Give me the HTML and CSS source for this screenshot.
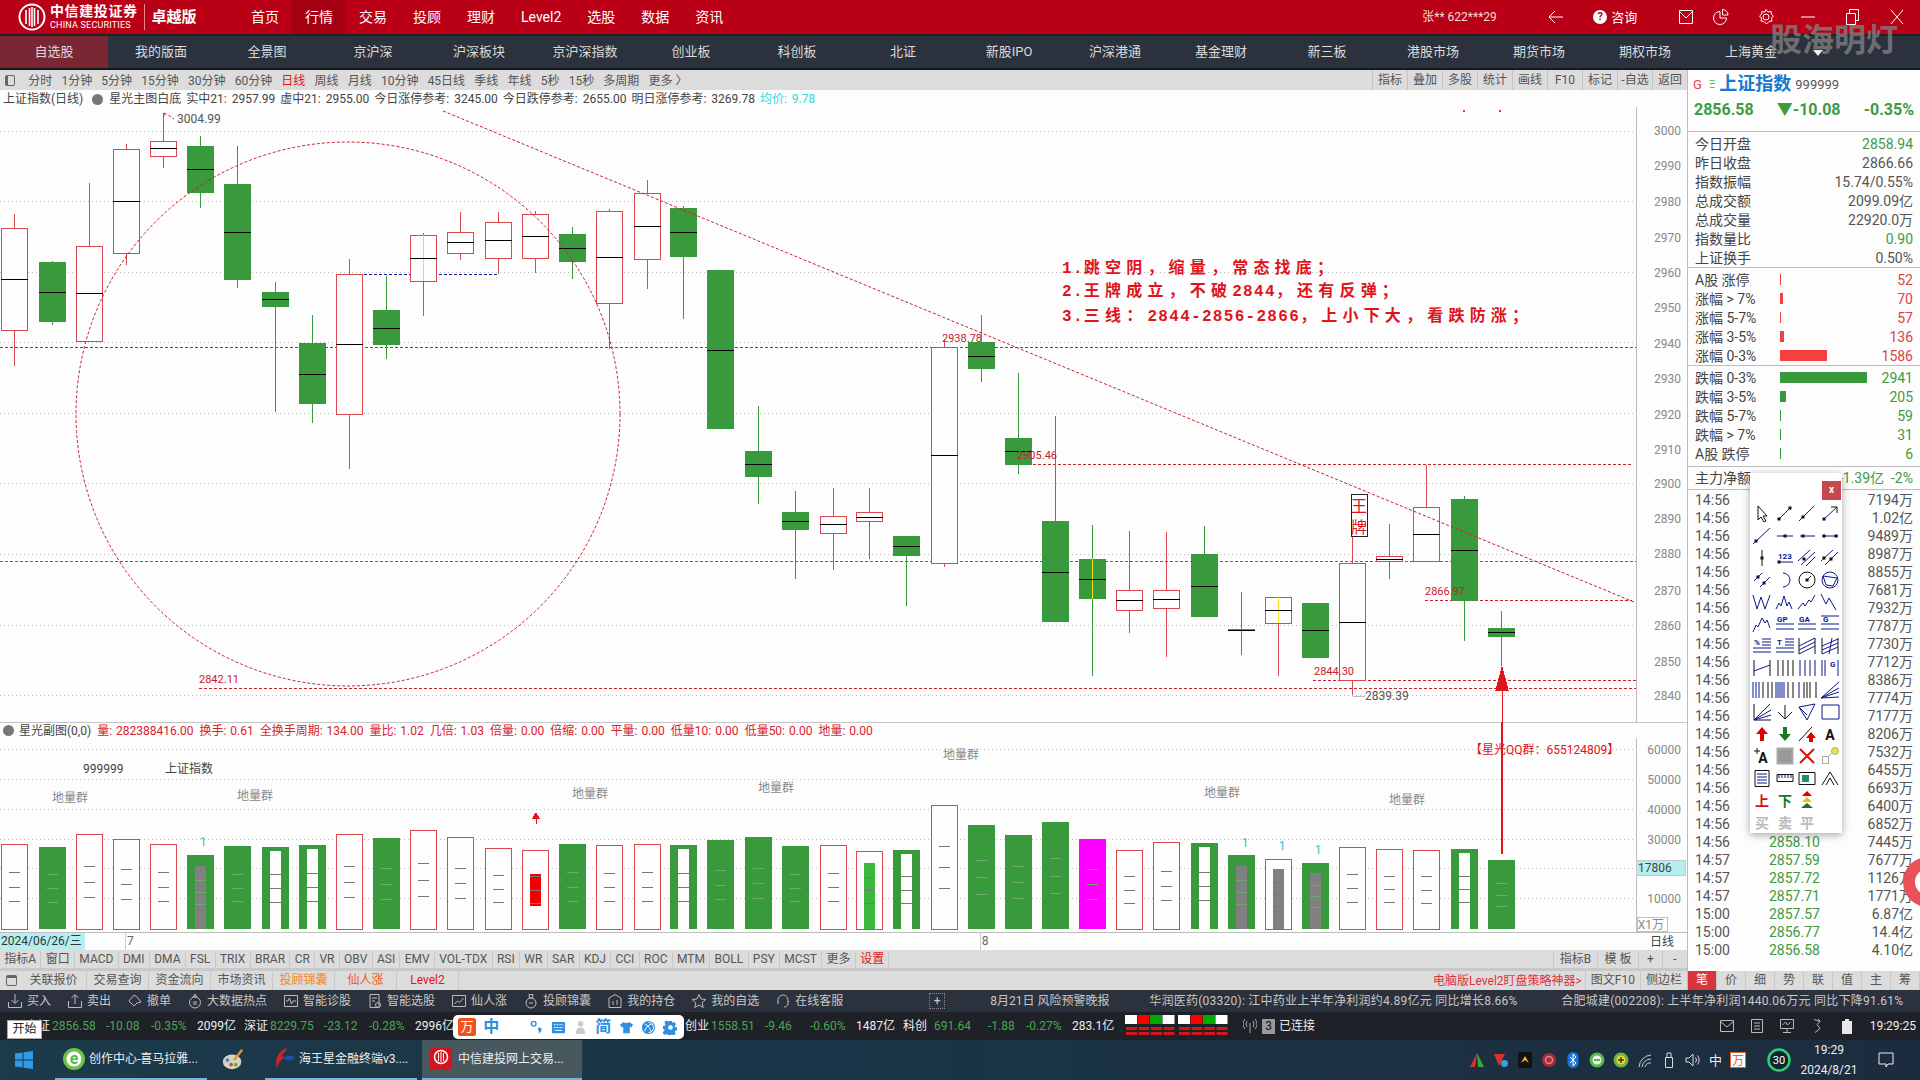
FILE: index.html
```html
<!DOCTYPE html>
<html lang="zh-CN">
<head>
    <meta charset="UTF-8">
    <title>中信建投证券 卓越版</title>
    <link rel="stylesheet" href="styles.css">
</head>
<body>
    <header class="topbar">
        <div class="logo">
            <svg class="logo-mark" viewBox="0 0 28 28"><circle cx="14" cy="14" r="12.5" fill="none" stroke="#fff" stroke-width="2"/><path d="M8 7v14M11.500 5v18M14 4v20M16.500 5v18M20 7v14" stroke="#fff" stroke-width="1.600"/></svg>
            <div class="logo-name"><b>中信建投证券</b><span>CHINA SECURITIES</span></div>
            <b class="logo-edition">卓越版</b>
        </div>
        <nav class="menu">
            <a>首页</a><a class="active">行情</a><a>交易</a><a>投顾</a><a>理财</a><a>Level2</a><a>选股</a><a>数据</a><a>资讯</a>
        </nav>
        <div class="top-right">
            <span class="user">张** 622***29</span>
            <svg class="ticon back" viewBox="0 0 18 18"><path d="M16 9H2M8 3L2 9l6 6" fill="none" stroke="#fff"/></svg>
            <span class="help"><i>?</i>咨询</span>
            <svg class="ticon mail" viewBox="0 0 18 18"><path d="M2.500 2.500h13v13h-13zM2.500 3.500L9 10l6.500-6.500" fill="none" stroke="#fff"/></svg>
            <svg class="ticon pie" viewBox="0 0 18 18"><path d="M8 3.500a6.500 6.500 0 1 0 6.500 6.500H8zM10.500 1.500v5.500H16a5.500 5.500 0 0 0-5.500-5.500z" fill="none" stroke="#fff"/></svg>
            <svg class="ticon gear" viewBox="0 0 18 18"><circle cx="9" cy="9" r="3" fill="none" stroke="#fff"/><path d="M9 1.500l2 2.500 3-.5.500 3 2 1.500-2 2 .5 3-3 .5-2.500 2.500-2.500-2.500-3-.5.500-3-2-2 2-1.500.5-3 3 .5z" fill="none" stroke="#fff"/></svg>
            <svg class="ticon min" viewBox="0 0 18 18"><path d="M2 9h14" stroke="#fff"/></svg>
            <svg class="ticon restore" viewBox="0 0 18 18"><path d="M3.500 5.500h9v11h-9zM6.500 5V1.500h9v11H13" fill="none" stroke="#fff"/></svg>
            <svg class="ticon close" viewBox="0 0 18 18"><path d="M3 2l12 14M15 2L3 16" stroke="#fff"/></svg>
        </div>
    </header>

    <nav class="market-nav">
        <a class="active">自选股</a><a>我的版面</a><a>全景图</a><a>京沪深</a><a>沪深板块</a><a>京沪深指数</a><a>创业板</a><a>科创板</a><a>北证</a><a>新股IPO</a><a>沪深港通</a><a>基金理财</a><a>新三板</a><a>港股市场</a><a>期货市场</a><a>期权市场</a><a>上海黄金</a>
        <i class="more-arrow"></i>
    </nav>

    <div class="workspace">
        <main class="main">
            <div class="period-bar">
                <i class="square-icon"></i>
                <a>分时</a><a>1分钟</a><a>5分钟</a><a>15分钟</a><a>30分钟</a><a>60分钟</a><a class="red">日线</a><a>周线</a><a>月线</a><a>10分钟</a><a>45日线</a><a>季线</a><a>年线</a><a>5秒</a><a>15秒</a><a>多周期</a><a>更多 〉</a>
                <div class="period-tools">
                    <a>指标</a><a>叠加</a><a>多股</a><a>统计</a><a>画线</a><a>F10</a><a>标记</a><a>-自选</a><a>返回</a>
                </div>
            </div>

            <div class="chart-info">
                <span>上证指数(日线)</span><i class="chev"></i><span>星光主图白底</span><span>实中21: 2957.99</span><span>虚中21: 2955.00</span><span>今日涨停参考: 3245.00</span><span>今日跌停参考: 2655.00</span><span>明日涨停参考: 3269.78</span><span class="cyan">均价: 9.78</span>
            </div>
            <svg id="kline" class="chart" viewBox="0 107 1686 615" width="1686" height="615"></svg>

            <div class="sub-info">
                <i class="chev"></i><span>星光副图(0,0)</span>
                <span class="reds">量: 282388416.00</span><span class="reds">换手: 0.61</span><span class="reds">全换手周期: 134.00</span><span class="reds">量比: 1.02</span><span class="reds">几倍: 1.03</span><span class="reds">倍量: 0.00</span><span class="reds">倍缩: 0.00</span><span class="reds">平量: 0.00</span><span class="reds">低量10: 0.00</span><span class="reds">低量50: 0.00</span><span class="reds">地量: 0.00</span>
                <i class="arrow-link"></i>
            </div>
            <svg id="volume" class="chart" viewBox="0 738 1686 194" width="1686" height="194"></svg>

            <div class="date-axis">
                <span class="date-now">2024/06/26/三</span>
                <span class="tick-seven">7</span>
                <span class="tick-eight">8</span>
                <span class="date-unit">日线</span>
            </div>

            <div class="index-tabs">
                <a>指标A</a><a>窗口</a><a>MACD</a><a>DMI</a><a>DMA</a><a>FSL</a><a>TRIX</a><a>BRAR</a><a>CR</a><a>VR</a><a>OBV</a><a>ASI</a><a>EMV</a><a>VOL-TDX</a><a>RSI</a><a>WR</a><a>SAR</a><a>KDJ</a><a>CCI</a><a>ROC</a><a>MTM</a><a>BOLL</a><a>PSY</a><a>MCST</a><a>更多</a><a class="red">设置</a>
                <div class="tabs-right"><a>指标B</a><a>模 板</a><a>+</a><a>-</a></div>
            </div>

            <div class="link-tabs">
                <i class="square-icon"></i>
                <a>关联报价</a><a>交易查询</a><a>资金流向</a><a>市场资讯</a><a class="orange">投顾锦囊</a><a class="orange-red">仙人涨</a><a class="red">Level2</a>
                <div class="tabs-right"><span class="promo">电脑版Level2盯盘策略神器&gt;</span><a>图文F10</a><a>侧边栏</a></div>
            </div>
        </main>

        <aside class="panel">
            <div class="quote-title"><span class="q-g">G</span><span class="q-e">Ξ</span><b>上证指数</b><span class="q-code">999999</span></div>
            <div class="quote-price"><b>2856.58</b><b>▼-10.08</b><b>-0.35%</b></div>
            <section class="stat-block" id="stats"></section>
            <section class="stat-block" id="ups"></section>
            <section class="stat-block downs" id="downs"></section>
            <div class="net-row"><span>主力净额</span><span class="green">-1.39亿 &nbsp;-2%</span></div>
            <div class="trades" id="trades"></div>
            <div class="panel-tabs"><a class="active">笔</a><a>价</a><a>细</a><a>势</a><a>联</a><a>值</a><a>主</a><a>筹</a></div>
        </aside>
    </div>

    <div class="action-bar">
        <a><svg viewBox="0 0 16 16"><path d="M8 1v9M4.500 7L8 10.500 11.500 7M1.500 9v5.500h13V9"/></svg>买入</a>
        <a><svg viewBox="0 0 16 16"><path d="M8 11V2M4.500 5L8 1.500 11.500 5M1.500 8v6.500h13V8"/></svg>卖出</a>
        <a><svg viewBox="0 0 16 16"><path d="M7 2L2 8l5 5 3-3 4-1-4-5z"/></svg>撤单</a>
        <a><svg viewBox="0 0 16 16"><circle cx="8" cy="9.500" r="5.500"/><path d="M8 1l2 3H6zM6 9h4M6 11h4"/></svg>大数据热点</a>
        <a><svg viewBox="0 0 16 16"><path d="M1.500 2.500h13v11h-13zM3 8h2l1.500-3 2 6 1.500-3h3"/></svg>智能诊股</a>
        <a><svg viewBox="0 0 16 16"><path d="M3 1.500h9v13H3zM5 5h5M5 8h3"/><circle cx="11" cy="12" r="2.500"/></svg>智能选股</a>
        <a><svg viewBox="0 0 16 16"><path d="M1.500 2.500h13v11h-13zM3.500 11l3-3 2 1.500 4-4.500"/></svg>仙人涨</a>
        <a><svg viewBox="0 0 16 16"><circle cx="8" cy="10" r="5"/><path d="M6 1.500h4L9.500 5h-3zM6 10h4"/></svg>投顾锦囊</a>
        <a><svg viewBox="0 0 16 16"><path d="M2 14.500V5l6-3.500L14 5v9.500zM6 8v4M10 7v5"/></svg>我的持仓</a>
        <a><svg viewBox="0 0 16 16"><path d="M8 1.500l2 4.500 4.800.5-3.600 3.200 1 4.800L8 12.100l-4.200 2.400 1-4.800L1.200 6.500 6 6z"/></svg>我的自选</a>
        <a><svg viewBox="0 0 16 16"><path d="M3 9V7a5 5 0 0 1 10 0v2M3 8v3M13 8v3M13 11c0 2-2 3-4 3"/></svg>在线客服</a>
        <span class="plus-box">+</span>
        <div class="news">
            <span class="news-one">8月21日 风险预警晚报</span>
            <span class="news-two">华润医药(03320): 江中药业上半年净利润约4.89亿元 同比增长8.66%</span>
            <span class="news-three">合肥城建(002208): 上半年净利润1440.06万元 同比下降91.61%</span>
        </div>
    </div>

    <div class="ticker">
        <span class="t-name first">上证</span><span class="up t-w1">2856.58</span><span class="up t-w2">-10.08</span><span class="up t-w3">-0.35%</span><span class="t-w4">2099亿</span>
        <span class="t-name">深证</span><span class="up t-w1">8229.75</span><span class="up t-w2">-23.12</span><span class="up t-w3">-0.28%</span><span class="t-w4">2996亿</span>
        <span class="t-gap"></span>
        <span class="t-name">创业</span><span class="up t-w1">1558.51</span><span class="up t-w2">-9.46</span><span class="up t-w3">-0.60%</span><span class="t-w4">1487亿</span>
        <span class="t-name">科创</span><span class="up t-w1s">691.64</span><span class="up t-w2s">-1.88</span><span class="up t-w3">-0.27%</span><span class="t-w4">283.1亿</span>
        <svg class="breadth" viewBox="0 0 104 30"><g id="breadth"></g></svg>
        <svg class="signal" viewBox="0 0 14 16"><path d="M7 5v10M4 3a5 5 0 0 0 0 6M10 3a5 5 0 0 1 0 6M2 1a8 8 0 0 0 0 10M12 1a8 8 0 0 1 0 10" fill="none" stroke="#aaa"/></svg>
        <span class="conn-num">3</span><span class="conn">已连接</span>
        <div class="ticker-right">
            <svg viewBox="0 0 16 16"><path d="M1.500 2.500h13v11h-13zM1.500 3.500L8 9l6.500-5.500"/></svg>
            <svg viewBox="0 0 16 16"><path d="M2.500 1.500h11v13h-11zM5 5h6M5 8h6M5 11h6"/></svg>
            <svg viewBox="0 0 16 16"><path d="M1.500 1.500h13v9h-13zM8 11v3M4 14.500h8M3.500 7l3-3 2 3 3-3"/></svg>
            <svg viewBox="0 0 16 16"><path d="M5 1.500l6 2-3 3 3 4-5 4M9 1l2 2"/></svg>
            <svg viewBox="0 0 16 16"><path class="solid" d="M3 3h3V1h4v2h3v13H3z"/></svg>
            <span>19:29:25</span>
        </div>
    </div>

    <div class="taskbar">
        <svg class="win" viewBox="0 0 20 20"><path d="M1 3.500l7.500-1v7H1zM9.500 2.300L19 1v8.500H9.500zM1 10.500h7.500v7l-7.500-1zM9.500 10.500H19V19l-9.500-1.300z" fill="#2e9be6"/></svg>
        <a class="task open task-a">
            <svg viewBox="0 0 24 24"><circle cx="12" cy="12" r="11" fill="#6cc24a"/><circle cx="12" cy="12" r="7.500" fill="#fff"/><text x="12" y="17" class="task-e">e</text></svg>创作中心-喜马拉雅...
        </a>
        <a class="task paint">
            <svg viewBox="0 0 26 26"><ellipse cx="12" cy="15" rx="10" ry="8" fill="#d9d2c0"/><circle cx="7" cy="13" r="2" fill="#3c7fd1"/><circle cx="11" cy="18" r="2" fill="#d8483a"/><circle cx="16" cy="18" r="2" fill="#57a84a"/><path d="M14 13L23 2" stroke="#d99a2b" stroke-width="2.500"/></svg>
        </a>
        <a class="task open task-b">
            <svg viewBox="0 0 24 24"><path d="M15 1C7 3 2 12 5 22c1-6 4-10 9-12-4 0-5-1-3-3 2-2 3-4 4-6z" fill="#d4202c"/><path d="M14 9c4-1 8 0 9 2-4 3-8 3-11 1z" fill="#1e4fa8"/></svg>海王星金融终端v3....
        </a>
        <a class="task open current">
            <svg viewBox="0 0 24 24"><rect x="1" y="1" width="22" height="22" rx="3" fill="#d3141f"/><circle cx="12" cy="10" r="6.500" fill="none" stroke="#fff" stroke-width="1.500"/><path d="M9.500 6v8M12 5v10M14.500 6v8" stroke="#fff"/></svg>中信建投网上交易...
        </a>
        <div class="tray">
            <svg viewBox="0 0 16 16"><path d="M8 1L1 15h5z" fill="#d8342c"/><path d="M8 1l7 14H9z" fill="#3ca83c"/></svg>
            <svg viewBox="0 0 16 16"><path d="M1 2l5 12 3-6 3-6z" fill="#d8342c"/><circle cx="11.500" cy="11.500" r="3.500" fill="#3aa0e0"/></svg>
            <svg viewBox="0 0 16 16"><rect x="1" y="0" width="14" height="16" rx="3" fill="#111"/><path d="M4 11l4-7 4 7-4-3z" fill="#f0c020"/></svg>
            <svg viewBox="0 0 16 16"><circle cx="8" cy="8" r="7" fill="#a52a38"/><circle cx="8" cy="8" r="3.500" fill="none" stroke="#d88" stroke-width="1.500"/></svg>
            <svg viewBox="0 0 16 16"><rect x="2.500" y="0" width="11" height="16" rx="5.500" fill="#1a74d8"/><path d="M5 5l6 6-3 3V2l3 3-6 6" fill="none" stroke="#fff"/></svg>
            <svg viewBox="0 0 16 16"><circle cx="8" cy="8" r="7.500" fill="#58b947"/><circle cx="8" cy="8" r="4.500" fill="#eee"/><path d="M5 8h6" stroke="#58b947" stroke-width="2"/></svg>
            <svg viewBox="0 0 16 16"><circle cx="8" cy="8" r="7.500" fill="#6db33f"/><circle cx="8" cy="8" r="4.500" fill="#f0d820"/><path d="M5 8h6M8 5v6" stroke="#333" stroke-width="1.500"/></svg>
            <svg viewBox="0 0 16 16"><path d="M2 15a13 13 0 0 1 12-12M5 15a9 9 0 0 1 9-8M8 15a5 5 0 0 1 6-4" fill="none" stroke="#ccc"/></svg>
            <svg viewBox="0 0 16 16"><path d="M4.500 5.500h7v10h-7zM6 1h4v4.500H6z" fill="none" stroke="#ddd"/></svg>
            <svg viewBox="0 0 16 16"><path d="M1 6h3l4-4v12l-4-4H1zM10.500 5.500a4 4 0 0 1 0 5M12.500 3.500a7 7 0 0 1 0 9" fill="none" stroke="#ddd"/></svg>
            <span class="tray-ime">中</span>
            <svg viewBox="0 0 16 16"><rect x="0.500" y="0.500" width="15" height="15" fill="#fff" stroke="#e8642c"/><text x="8" y="12.500" class="tray-wan">万</text></svg>
            <svg class="tray-ring" viewBox="0 0 24 24"><circle cx="12" cy="12" r="10.500" fill="#123" stroke="#2ecf72" stroke-width="2.500"/><text x="12" y="16" class="tray-num">30</text></svg>
            <div class="clock"><span>19:29</span><span>2024/8/21</span></div>
            <svg class="note" viewBox="0 0 18 18"><path d="M2 2h14v11h-5l-2 3v-3H2z" fill="none" stroke="#eee"/></svg>
        </div>
    </div>

    <!-- overlays -->
    <div class="watermark">股海明灯</div>
    <div class="start-tip">开始</div>
    <div class="ime-bar">
        <span class="ime-logo">万</span>
        <span class="ime-zh">中</span>
        <svg viewBox="0 0 16 16"><path d="M10 1a7 7 0 0 1-7 13A7 7 0 0 0 10 1z"/></svg>
        <svg viewBox="0 0 16 16"><circle cx="5" cy="4" r="2.500" fill="none" stroke="#2e8fe0" stroke-width="1.500"/><path d="M11 8c2 0 3 1.500 2 4l-3 3c1-2 1-3 0-4-1-1 0-3 1-3z"/></svg>
        <svg viewBox="0 0 16 16"><rect x="1" y="2" width="14" height="12" rx="1"/><path d="M3 5h2M6 5h2M9 5h2M12 5h1M3 8h2M6 8h2M9 8h2M12 8h1M4 11h8" stroke="#fff"/></svg>
        <svg class="ime-off" viewBox="0 0 16 16"><circle cx="8" cy="4" r="3"/><path d="M3 15c0-5 2-7 5-7s5 2 5 7z"/></svg>
        <span class="ime-zh">简</span>
        <svg viewBox="0 0 16 16"><path d="M5 2L1 5l2 3 1.500-1v7h7V7L13 8l2-3-4-3c-1 1.500-5 1.500-6 0z"/></svg>
        <svg viewBox="0 0 16 16"><circle cx="8" cy="8" r="7"/><path d="M8 2.500a5.500 5.500 0 0 1 0 11M4 4c4 2 6 5 7 9M12 4c-4 1-7 4-8 8" fill="none" stroke="#fff"/></svg>
        <svg viewBox="0 0 16 16"><path d="M6.500 1h3l.5 2 2-1 2 2.500-1.500 1.500.5 1.500 2 .5v3l-2 .5-.5 1.500 1 1.500-2 2-2-1-.5 0-.5 2h-3l-.5-2-1.500-.5-2 1-2-2 1-2L2 10l-2-.5v-3L2 6l.5-1.500-1-2 2-2 2 1z"/><circle cx="8" cy="8" r="2.500" fill="#fff"/></svg>
    </div>
    <div class="float-ball"></div>
    <div class="draw-palette">
        <div class="palette-head"><a class="palette-close">x</a></div>
        <div class="palette-grid" id="palette"></div>
    </div>

    <script src="chart.js"></script>
</body>
</html>
```

FILE: styles.css
```css
* {
    box-sizing: border-box;
}
body {
    margin: 0;
    width: 1920px;
    height: 1080px;
    overflow: hidden;
    position: relative;
    font-family: Roboto, "Noto Sans CJK SC", sans-serif;
    font-size: 12px;
    line-height: 1;
    color: #444;
    background: #222;
}
a {
    display: block;
}
.red {
    color: #e0141c;
}
.orange {
    color: #f08a1c;
}
.orange-red {
    color: #f0541c;
}
.green {
    color: #3f9a44;
}
.cyan {
    color: #35d6dc;
}

/* top bars */
.topbar {
    height: 34px;
    margin-bottom: 2px;
    background: #b90016;
    color: #fff;
    display: flex;
    align-items: center;
    position: relative;
}
.logo {
    width: 238px;
    padding-left: 18px;
    display: flex;
    align-items: center;
}
.logo-mark {
    width: 28px;
    height: 28px;
    margin-right: 4px;
}
.logo-name {
    display: flex;
    flex-direction: column;
    gap: 3px;
    padding-right: 6px;
    border-right: 1px solid #e88;
}
.logo-name b {
    font-size: 14px;
    letter-spacing: 0.6px;
}
.logo-name span {
    font-size: 9px;
    letter-spacing: 0.2px;
}
.logo-edition {
    font-size: 15px;
    margin-left: 7px;
}
.menu {
    display: flex;
    height: 34px;
}
.menu a {
    padding: 0 13px;
    font-size: 14px;
    line-height: 34px;
}
.menu a.active {
    background: #a50012;
}
.top-right {
    flex: 1;
    display: flex;
    align-items: center;
    padding-left: 686px;
    font-size: 12px;
    color: #f4dcdc;
}
.user {
    width: 125px;
}
.ticon {
    width: 18px;
    height: 18px;
    flex: none;
}
.help {
    display: flex;
    align-items: center;
    margin-left: 28px;
    width: 68px;
    font-size: 13px;
    color: #fff;
}
.help i {
    width: 14px;
    height: 14px;
    margin-right: 4px;
    border-radius: 50%;
    background: #fff;
    color: #b90016;
    font-style: normal;
    font-weight: bold;
    font-size: 11px;
    text-align: center;
    line-height: 14px;
}
.mail {
    margin-left: 16px;
}
.pie {
    margin-left: 17px;
}
.gear {
    margin-left: 27px;
}
.min {
    margin-left: 24px;
}
.restore {
    margin-left: 26px;
}
.close {
    margin-left: 27px;
}
.market-nav {
    height: 32px;
    background: #2c323d;
    border-bottom: 0;
    display: flex;
    padding-left: 2px;
    position: relative;
}
.market-nav a {
    width: 106px;
    text-align: center;
    font-size: 13px;
    line-height: 32px;
    color: #dadada;
}
.market-nav a.active {
    background: #7b2733;
    margin-left: -2px;
    width: 108px;
    padding-right: 0;
}
.more-arrow {
    position: absolute;
    left: 1813px;
    top: 14px;
    border: 5px solid transparent;
    border-top: 6px solid #eee;
}

/* main column */
.workspace {
    height: 922px;
    display: flex;
    border-top: 2px solid #15181d;
    background: #fdfdfd;
}
.main {
    width: 1687px;
    flex: none;
    background: #fdfdfd;
}
.period-bar {
    height: 20px;
    background: #dcdcdc;
    display: flex;
    align-items: center;
    padding-left: 5px;
    gap: 9.200px;
    color: #555;
}
.period-bar > a {
    padding-top: 1px;
}
.square-icon {
    width: 10px;
    height: 11px;
    border: 1px solid #666;
    border-left-width: 3px;
    border-radius: 2px;
    margin-right: 4px;
    flex: none;
}
.period-tools {
    margin-left: auto;
    display: flex;
    height: 20px;
}
.period-tools a {
    width: 35px;
    line-height: 21px;
    text-align: center;
    border-left: 1px solid #c4c4c4;
}
.chart-info {
    height: 17px;
    display: flex;
    align-items: center;
    gap: 5px;
    padding: 1px 0 0 3px;
    white-space: nowrap;
    word-spacing: 2px;
}
.chev {
    width: 11px;
    height: 11px;
    border-radius: 50%;
    background: #777;
    flex: none;
    margin: 0 1px 0 4px;
}
.chart {
    display: block;
    shape-rendering: crispEdges;
}
.sub-info {
    height: 16px;
    display: flex;
    align-items: center;
    gap: 6px;
    padding-left: 0;
    border-top: 1px solid #c4c4c4;
    white-space: nowrap;
    word-spacing: 1px;
    position: relative;
}
.sub-info .chev {
    margin: 0 -1px 0 3px;
}
.sub-info .reds {
    color: #d8222c;
}
.arrow-link {
    position: absolute;
    left: 1501px;
    top: -1px;
    width: 2px;
    height: 16px;
    background: #e0141c;
}

/* svg parts */
.grid {
    stroke: #bdbdbd;
    stroke-dasharray: 1 3;
}
.axis {
    stroke: #bdbdbd;
}
.wick-r {
    stroke: #d9484f;
}
.wick-g {
    stroke: #389a3c;
}
.body-r {
    fill: #fdfdfd;
    stroke: #d9484f;
}
.body-g {
    fill: #389a3c;
}
.mid {
    stroke: #000;
    stroke-width: 1.500;
}
.yellow {
    stroke: #f5e21e;
}
.dash-red {
    stroke: #c8202c;
    stroke-dasharray: 3 2;
    stroke-width: 1.300;
}
.dash-green {
    stroke: #2e8a34;
    stroke-dasharray: 3 2;
}
.dash-purple {
    stroke: #a01c8c;
    stroke-dasharray: 3 2;
    stroke-width: 1.300;
}
.dash-thin {
    fill: none;
    stroke: #c8202c;
    stroke-dasharray: 3 2;
    shape-rendering: auto;
}
.navy-dash {
    stroke: #10189a;
    stroke-dasharray: 3 2;
    stroke-width: 1.300;
}
.t-axis {
    fill: #888;
    font-size: 12px;
    text-anchor: end;
}
.t-price {
    fill: #555;
    font-size: 12px;
}
.t-mark {
    fill: #c8202c;
    font-size: 11px;
}
.t-note {
    fill: #e0141c;
    font-family: "Liberation Mono", "Noto Sans CJK SC", monospace;
    font-size: 16px;
    font-weight: bold;
    letter-spacing: 5.200px;
}
.t-num {
    letter-spacing: 1.300px;
}
.t-card {
    fill: #e0141c;
    font-size: 16px;
    text-anchor: middle;
}
.card {
    fill: #fff;
    stroke: #222;
}
.t-label {
    fill: #888;
    font-size: 12px;
    text-anchor: middle;
}
.t-dark {
    fill: #444;
    font-size: 12px;
}
.t-one {
    fill: #35c0c4;
    font-size: 12px;
    text-anchor: middle;
}
.t-qq {
    fill: #e0141c;
    font-size: 12px;
}
.arrow {
    fill: #e0141c;
    stroke: #e0141c;
}
.vol-tick {
    stroke: #777;
}
.vol-tick-g {
    stroke: #70a874;
}
.last-box {
    fill: #b4eef0;
    stroke: #c8c8c8;
}
.unit-box {
    fill: none;
    stroke: #c0c0c0;
}
.dot-pink {
    fill: #e020c0;
}

/* rows under the chart */
.date-axis {
    height: 18px;
    position: relative;
    border-top: 1px solid #bdbdbd;
    background: #fdfdfd;
    display: flex;
    align-items: center;
    color: #666;
}
.date-now {
    width: 85px;
    height: 17px;
    line-height: 17px;
    padding-left: 1px;
    background: #b4eef0;
    color: #333;
}
.tick-seven {
    margin-left: 40px;
    border-left: 1px solid #ccc;
    padding-left: 1px;
    line-height: 17px;
}
.tick-eight {
    margin-left: 846px;
    border-left: 1px solid #ccc;
    padding-left: 1px;
    line-height: 17px;
}
.date-unit {
    margin-left: auto;
    width: 50px;
    text-align: center;
    color: #444;
}
.index-tabs {
    height: 19px;
    margin-top: -1px;
    background: #dcdcdc;
    border-top: 1px solid #c4c4c4;
    display: flex;
    align-items: center;
    color: #555;
}
.index-tabs a {
    padding: 0 4.300px 1px;
    line-height: 16px;
    border-right: 1px solid #c8c8c8;
}
.tabs-right {
    margin-left: auto;
    display: flex;
    height: 100%;
    align-items: center;
}
.index-tabs .tabs-right a {
    padding: 0 0 1px;
    text-align: center;
    border-right: 0;
    border-left: 1px solid #c8c8c8;
    width: 44px;
}
.index-tabs .tabs-right a:nth-child(2) {
    width: 41px;
}
.index-tabs .tabs-right a:nth-child(3) {
    width: 24px;
}
.index-tabs .tabs-right a:nth-child(4) {
    width: 25px;
}
.link-tabs {
    height: 22px;
    background: #dcdcdc;
    border-top: 3px solid #c8c8c8;
    display: flex;
    align-items: center;
    padding-left: 6px;
    color: #555;
}
.link-tabs .square-icon {
    margin-right: 0;
    border-left-width: 1px;
    border-top-width: 3px;
    width: 11px;
}
.link-tabs > a {
    width: 62px;
    line-height: 19px;
    text-align: center;
    border-right: 1px solid #c8c8c8;
}
.link-tabs > a:first-of-type {
    margin-left: 4px;
    width: 66px;
}
.link-tabs .tabs-right a {
    line-height: 19px;
    padding: 0 5px;
    border-left: 1px solid #c8c8c8;
}
.promo {
    color: #e0303a;
    padding-right: 3px;
}

/* right panel */
.panel {
    flex: 1;
    background: #fdfdfd;
    border-left: 1px solid #bdbdbd;
    display: flex;
    flex-direction: column;
    position: relative;
}
.quote-title {
    height: 26px;
    display: flex;
    align-items: center;
    padding: 2px 0 0 5px;
}
.quote-title b {
    font-size: 18px;
    color: #1a78d0;
    margin: 0 4px 0 4px;
    font-weight: bold;
}
.q-g {
    color: #e0444c;
    font-size: 13px;
    width: 16px;
}
.q-e {
    color: #48b048;
    font-size: 11px;
}
.q-code {
    font-size: 13px;
    color: #555;
}
.quote-price {
    height: 36px;
    padding: 0 6px 8px 6px;
    display: flex;
    justify-content: space-between;
    align-items: center;
    color: #3f9a44;
    font-size: 16px;
    border-bottom: 1px solid #bdbdbd;
}
.stat-block {
    padding: 2px 7px 0 7px;
    border-bottom: 1px solid #bdbdbd;
}
.stat-block.downs {
    padding-bottom: 3px;
}
.stat-row {
    height: 19px;
    display: flex;
    align-items: center;
    justify-content: space-between;
    font-size: 14px;
}
.stat-row .bar-slot {
    flex: 1;
    padding-left: 0;
}
.stat-row .label {
    width: 85px;
}
.bar {
    display: block;
    height: 11px;
}
.bar-r {
    background: #f44040;
}
.bar-g {
    background: #389a3c;
}
.val-r {
    color: #d9434a;
}
.val-g {
    color: #3f9a44;
}
.val-n {
    color: #555;
}
.net-row {
    height: 23px;
    padding: 0 7px;
    display: flex;
    align-items: center;
    justify-content: space-between;
    font-size: 14px;
    border-bottom: 1px solid #bdbdbd;
}
.trades {
    flex: 1;
    padding: 1px 7px 0;
}
.trade-row {
    height: 18px;
    display: grid;
    grid-template-columns: 74px 60px 1fr;
    align-items: center;
    font-size: 14px;
    color: #555;
}
.trade-row span:nth-child(2) {
    color: #3f9a44;
}
.trade-row span:nth-child(3) {
    text-align: right;
}
.panel-tabs {
    height: 19px;
    display: flex;
    background: #dcdcdc;
    color: #555;
}
.panel-tabs a {
    flex: 1;
    text-align: center;
    line-height: 19px;
    border-right: 1px solid #c8c8c8;
}
.panel-tabs a.active {
    background: #d8343c;
    color: #fff;
}

/* dark bars */
.action-bar {
    height: 22px;
    background: #2c323d;
    display: flex;
    align-items: center;
    padding-left: 7px;
    color: #c8c8c8;
    white-space: nowrap;
}
.action-bar a {
    display: flex;
    align-items: center;
    gap: 4px;
    margin-right: 16px;
}
.action-bar svg {
    width: 16px;
    height: 16px;
    fill: none;
    stroke: #bbb;
}
.plus-box {
    margin-left: 70px;
    width: 16px;
    text-align: center;
    border: 1px dotted #888;
    line-height: 14px;
}
.news {
    display: flex;
    margin-left: 45px;
}
.news-one {
    width: 159px;
}
.news-two {
    width: 412px;
    letter-spacing: 0.250px;
}
.news-three {
    letter-spacing: 0.250px;
}
.ticker {
    height: 28px;
    background: #1e2127;
    display: flex;
    align-items: center;
    color: #eee;
    white-space: nowrap;
    padding-left: 26px;
}
.ticker .up {
    color: #49a84c;
}
.t-name {
    width: 26px;
}
.t-w1 {
    width: 54px;
}
.t-w2 {
    width: 45px;
}
.t-w3 {
    width: 46px;
}
.t-w4 {
    width: 47px;
}
.t-w1s {
    width: 55px;
    padding-left: 5px;
}
.t-w2s {
    width: 42px;
    padding-left: 4px;
}
.t-gap {
    width: 223px;
}
.breadth {
    width: 104px;
    height: 30px;
    margin-left: 6px;
}
.signal {
    width: 14px;
    height: 16px;
    margin-left: 14px;
}
.conn-num {
    width: 13px;
    height: 15px;
    margin-left: 5px;
    background: #999;
    color: #111;
    text-align: center;
    line-height: 15px;
}
.conn {
    margin-left: 4px;
}
.ticker-right {
    margin-left: auto;
    display: flex;
    align-items: center;
    gap: 14px;
    padding-right: 4px;
}
.ticker-right svg {
    width: 16px;
    height: 16px;
    fill: none;
    stroke: #bbb;
}
.ticker-right .solid {
    fill: #e8e8e8;
    stroke: none;
}
.ticker-right span {
    margin-left: 1px;
}

/* taskbar */
.taskbar {
    height: 40px;
    background: linear-gradient(90deg, #1b3a4a, #1a3547 45%, #1c2c3e);
    display: flex;
    align-items: stretch;
    color: #eee;
    position: relative;
}
.win {
    width: 20px;
    height: 20px;
    margin: 10px 13px 0 14px;
    flex: none;
}
.task {
    display: flex;
    align-items: center;
    gap: 5px;
    width: 152px;
    padding-left: 7px;
    font-size: 12px;
    white-space: nowrap;
    flex: none;
}
.task svg {
    width: 24px;
    height: 24px;
    flex: none;
}
.open {
    border-bottom: 2px solid #78b4dc;
}
.task-a {
    margin-left: 8px;
}
.task-a,
.task-b {
    gap: 3px;
}
.paint {
    width: 58px;
    padding-left: 14px;
}
.current {
    margin-left: 5px;
    width: 160px;
    background: #48585f;
}
.task-e {
    fill: #58b947;
    font-size: 16px;
    font-weight: bold;
    text-anchor: middle;
}
.tray {
    margin-left: auto;
    display: flex;
    align-items: center;
    gap: 8px;
    padding-right: 25px;
}
.tray svg {
    width: 16px;
    height: 16px;
}
.tray svg.tray-ring {
    width: 24px;
    height: 24px;
    margin-left: 13px;
}
.tray-ime {
    font-size: 13px;
}
.tray-wan {
    fill: #e8642c;
    font-size: 12px;
    text-anchor: middle;
}
.tray-num {
    fill: #fff;
    font-size: 11px;
    text-anchor: middle;
}
.clock {
    width: 72px;
    margin-left: -6px;
    display: flex;
    flex-direction: column;
    align-items: center;
    gap: 8px;
}
.tray svg.note {
    width: 18px;
    height: 18px;
    margin-left: 4px;
}

/* overlays */
.watermark {
    position: absolute;
    left: 1770px;
    top: 24px;
    font-size: 32px;
    line-height: 32px;
    font-weight: bold;
    color: rgba(128, 128, 128, 0.78);
    white-space: nowrap;
}
.start-tip {
    position: absolute;
    left: 7px;
    top: 1020px;
    width: 35px;
    height: 19px;
    background: #fff;
    color: #222;
    border: 1px solid #aaa;
    text-align: center;
    line-height: 17px;
}
.ime-bar {
    position: absolute;
    left: 453px;
    top: 1015px;
    width: 231px;
    height: 24px;
    background: #fff;
    border-radius: 5px;
    display: flex;
    align-items: center;
    justify-content: space-between;
    padding: 0 6px 0 5px;
}
.ime-bar svg {
    width: 15px;
    height: 15px;
    fill: #2e8fe0;
}
.ime-bar .ime-off {
    fill: #ccc;
}
.ime-logo {
    width: 18px;
    height: 18px;
    background: #f0541c;
    color: #fff;
    text-align: center;
    line-height: 18px;
    border-radius: 2px;
    font-size: 13px;
}
.ime-zh {
    color: #2e8fe0;
    font-size: 16px;
    font-weight: bold;
}
.float-ball {
    position: absolute;
    left: 1903px;
    top: 857px;
    width: 50px;
    height: 50px;
    border-radius: 50%;
    border: 12px solid #e8505a;
    background: #fff;
}
.draw-palette {
    position: absolute;
    left: 1750px;
    top: 473px;
    width: 92px;
    height: 360px;
    background: #fff;
    box-shadow: 0 2px 8px rgba(0, 0, 0, 0.35);
    padding: 0 1px;
}
.palette-head {
    height: 30px;
    display: flex;
    justify-content: flex-end;
    padding-top: 8px;
}
.palette-close {
    width: 19px;
    height: 19px;
    background: #c8474f;
    color: #fff;
    font-weight: bold;
    font-size: 10px;
    line-height: 17px;
    text-align: center;
}
.palette-grid {
    display: grid;
    grid-template-columns: repeat(4, 22.500px);
    grid-auto-rows: 22px;
}
.palette-grid svg {
    width: 22px;
    height: 22px;
}
.ic {
    fill: none;
    stroke: #0a1a8c;
    stroke-width: 1;
}
.ic-k {
    fill: none;
    stroke: #111;
}
.ic-dot {
    fill: #111;
}
.ic-txt {
    fill: #0a1a8c;
    font-size: 8px;
    font-weight: bold;
}
.ic-big {
    font-size: 14px;
    text-anchor: middle;
}
```

FILE: chart.js
```js
// x, bodyTop, bodyBottom, wickTop, wickBottom, midLine, colour, doji-yellow
const candles = [
    [14, 228, 330, 214, 366, 279, 'r'], [52, 262, 322, 261, 325, 292, 'g'], [89.5, 246, 341, 183, 341, 293, 'r'],
    [126.5, 149, 253, 144, 265, 201, 'r'], [163.5, 141, 156, 113, 168, 148, 'r'], [200, 146, 193, 136, 208, 169, 'g'],
    [237.5, 184, 280, 146, 288, 232, 'g'], [275.5, 292, 307, 282, 412, 299, 'g'], [312.5, 343, 404, 315, 423, 374, 'g'],
    [349.5, 274, 414, 259, 469, 344, 'r'], [386, 310, 345, 276, 359, 328, 'g'], [423.5, 235, 281, 233, 316, 258, 'r', 1],
    [460.5, 232, 253, 212, 260, 242, 'r'], [498.5, 222, 258, 212, 274, 240, 'r'], [535.5, 214, 258, 211, 273, 236, 'r'],
    [572.5, 234, 262, 227, 279, 248, 'g'], [609.5, 211, 303, 209, 349, 257, 'r'], [647, 193, 259, 180, 289, 226, 'r'],
    [683.5, 208, 257, 206, 319, 232, 'g'], [720.5, 270, 429, 270, 429, 350, 'g'], [758.5, 451, 477, 406, 504, 464, 'g'],
    [795.5, 512, 530, 491, 579, 521, 'g'], [833, 516, 533, 488, 570, 524, 'r'], [869.5, 512, 521, 488, 559, 517, 'r'],
    [906.5, 536, 556, 536, 606, 546, 'g'], [944.5, 347, 563, 340, 567, 455, 'r'], [981.5, 342, 369, 315, 382, 356, 'g'],
    [1018.5, 438, 465, 373, 474, 451, 'g'], [1055.5, 521, 622, 416, 622, 572, 'g'], [1092.5, 559, 599, 525, 676, 579, 'g', 1],
    [1129.5, 590, 610, 531, 633, 600, 'r'], [1166.5, 590, 608, 532, 657, 599, 'r'], [1204.5, 554, 617, 526, 617, 586, 'g'],
    [1241.5, 629, 631, 592, 655, 630, 'g'], [1278.5, 597, 623, 597, 676, 610, 'r', 1], [1315.5, 603, 658, 603, 658, 630, 'g'],
    [1352.5, 563, 680, 497, 695, 622, 'r'], [1389.5, 556, 561, 524, 579, 559, 'r'], [1426.5, 507, 561, 465, 561, 534, 'r'],
    [1464.5, 499, 601, 496, 641, 550, 'g'], [1501.5, 628, 637, 611, 666, 632, 'g']
];

// top of each volume bar, kind: r, g, h (hollow green), m (magenta), inner: [kind, top, bottom]
const volumes = [
    [844, 'r'], [847, 'g'], [834, 'r'], [839, 'r'], [844, 'r'], [855, 'g', ['#808080', 866, 929]], [846, 'g'], [847, 'h'], [845, 'h'],
    [834, 'r'], [838, 'g'], [830, 'r'], [837, 'r'], [848, 'r'], [850, 'r', ['#f00000', 874, 906]], [844, 'g'], [845, 'r'], [844, 'r'],
    [845, 'h'], [840, 'g'], [837, 'g'], [846, 'g'], [845, 'r'], [851, 'r', ['#3cb83c', 863, 929]], [850, 'h'], [805, 'r'], [825, 'g'],
    [835, 'g'], [822, 'g'], [839, 'm'], [850, 'r'], [842, 'r'], [843, 'h'], [855, 'g', ['#808080', 866, 929]], [859, 'r', ['#808080', 869, 929]],
    [863, 'g', ['#808080', 873, 929]], [847, 'r'], [849, 'r'], [850, 'r'], [849, 'h'], [860, 'g']
];

function line(x1, y1, x2, y2, cls) {
    return `<line x1="${x1}" y1="${y1}" x2="${x2}" y2="${y2}" class="${cls}"/>`;
}
function rect(x, y, w, h, cls, fill) {
    const style = fill ? ` style="fill:${fill}"` : '';
    return `<rect x="${x}" y="${y}" width="${w}" height="${h}" class="${cls}"${style}/>`;
}
function text(x, y, str, cls) {
    return `<text x="${x}" y="${y}" class="${cls}">${str}</text>`;
}
// latin parts of the note keep a narrower spacing than the chinese ones
function note(y, str) {
    const body = str.replace(/[0-9.\-]+/g, m => `<tspan class="t-num">${m}</tspan>`);
    return text(1062, y, body, 't-note');
}

function drawKline() {
    let s = '';
    [131, 201, 272, 342, 413, 483, 554, 625, 695].forEach(y => { s += line(0, y + 0.5, 1636, y + 0.5, 'grid'); });
    s += line(1636.5, 107, 1636.5, 722, 'axis');

    let value = 3000;
    [130, 165, 201, 237, 272, 307, 343, 378, 414, 449, 483, 518, 553, 590, 625, 661, 695].forEach(y => {
        s += text(1681, y + 5, value, 't-axis');
        value -= 10;
    });

    s += line(0, 347.5, 1636, 347.5, 'dash-purple');
    s += line(0, 347.5, 1636, 347.5, 'dash-red');
    s += line(0, 561.5, 1636, 561.5, 'dash-green');
    s += line(1018, 464.5, 1632, 464.5, 'dash-red');
    s += line(1425, 600.5, 1632, 600.5, 'dash-red');
    s += line(1313, 680.5, 1636, 680.5, 'dash-red');
    s += line(199, 688.5, 1636, 688.5, 'dash-red');
    s += line(349, 274.5, 498, 274.5, 'navy-dash');

    candles.forEach(c => {
        const [x, top, bot, wt, wb, mid, col, yellow] = c;
        const cx = Math.floor(x) + 0.5;
        s += line(cx, wt, cx, wb, 'wick-' + col);
        if (col === 'r') s += rect(cx - 13, top + 0.5, 26, bot - top, 'body-r');
        else s += rect(cx - 13.5, top, 27, bot - top, 'body-g');
        if (yellow) s += line(cx, top, cx, bot, 'yellow');
        s += line(cx - 13.5, mid + 0.5, cx + 13.5, mid + 0.5, 'mid');
    });

    // hand drawn lines
    s += `<ellipse cx="348" cy="414" rx="272" ry="272" class="dash-thin"/>`;
    s += `<line x1="443" y1="111" x2="1634" y2="602" class="dash-thin"/>`;

    s += text(177, 123, '3004.99', 't-price');
    s += `<path d="M164 113l0 4M164 113l4 2 6 4" class="dash-thin"/>`;
    s += text(1365, 700, '2839.39', 't-price');
    s += line(1353, 696.5, 1365, 696.5, 'axis');
    s += text(942, 342, '2938.78', 't-mark');
    s += text(1017, 459, '2905.46', 't-mark');
    s += text(1425, 595, '2866.97', 't-mark');
    s += text(1314, 675, '2844.30', 't-mark');
    s += text(199, 683, '2842.11', 't-mark');

    s += note(273, '1.跳空阴，缩量，常态找底；');
    s += note(296, '2.王牌成立，不破2844，还有反弹；');
    s += note(321, '3.三线：2844-2856-2866，上小下大，看跌防涨；');

    s += rect(1351, 494, 16, 42, 'card');
    s += text(1359, 512, '王', 't-card');
    s += text(1359, 533, '牌', 't-card');

    s += `<path d="M1502 722V690M1502 667l-6 23h12z" class="arrow"/>`;
    s += `<circle cx="1464" cy="111" r="1.500" class="dot-pink"/><circle cx="1500" cy="111" r="1.500" class="dot-pink"/>`;
    s += `<path d="M1607 96l4 4-4 4-4-4z" fill="none" stroke="#777"/>`;
    s += rect(1622.5, 95.5, 9, 10, 'unit-box');
    document.getElementById('kline').innerHTML = s;
}

function drawVolume() {
    let s = '';
    [749, 779, 809, 839, 868, 898].forEach(y => { s += line(0, y + 0.5, 1636, y + 0.5, 'grid'); });
    s += line(1636.5, 738, 1636.5, 932, 'axis');
    [[60000, 749], [50000, 779], [40000, 809], [30000, 839], [10000, 898]].forEach(t => {
        s += text(1681, t[1] + 5, t[0], 't-axis');
    });
    s += rect(1636.5, 860.5, 49, 15, 'last-box');
    s += text(1638, 872, '17806', 't-dark');
    s += rect(1637.5, 917.5, 30, 14, 'unit-box');
    s += text(1664, 929, 'X1万', 't-axis');

    volumes.forEach((v, i) => {
        const [top, kind, inner] = v;
        const cx = Math.floor(candles[i][0]) + 0.5;
        const h = 929 - top;
        const ticks = [top + h / 3, top + h / 2, top + h * 2 / 3].map(Math.round);
        if (kind === 'r') s += rect(cx - 13, top + 0.5, 26, h, 'body-r');
        else if (kind === 'g') s += rect(cx - 13.5, top, 27, h, 'body-g');
        else if (kind === 'm') s += rect(cx - 13.5, top, 27, h, '', '#ff00ff');
        else {
            s += rect(cx - 13.5, top, 27, h, 'body-g');
            s += rect(cx - 5.5, top + 4, 11, h - 4, '', '#fdfdfd');
        }
        if (inner) s += rect(cx - 5.5, inner[1], 11, inner[2] - inner[1], '', inner[0]);
        ticks.forEach(y => {
            s += line(cx - 5.5, y + 0.5, cx + 5.5, y + 0.5, kind === 'g' || kind === 'm' ? 'vol-tick-g' : 'vol-tick');
        });
    });

    [[70, 798], [255, 796], [590, 794], [776, 788], [961, 755], [1222, 793], [1407, 800]].forEach(p => {
        s += text(p[0], p[1] + 4, '地量群', 't-label');
    });
    s += text(83, 773, '999999', 't-dark');
    s += text(165, 773, '上证指数', 't-dark');
    [[203, 842], [1245, 843], [1282, 846], [1318, 850]].forEach(p => {
        s += text(p[0], p[1] + 4, '1', 't-one');
    });
    s += text(1470, 754, '【星光QQ群：655124809】', 't-qq');
    s += `<path d="M1502 738V854" class="arrow" stroke-width="1.500"/>`;
    s += `<path d="M536 824v-7M536 813l-3 5h6z" class="arrow"/>`;
    document.getElementById('volume').innerHTML = s;
}

function fillPanel() {
    const stats = [
        ['今日开盘', '2858.94', 'g'], ['昨日收盘', '2866.66', 'n'], ['指数振幅', '15.74/0.55%', 'n'], ['总成交额', '2099.09亿', 'n'],
        ['总成交量', '22920.0万', 'n'], ['指数量比', '0.90', 'g'], ['上证换手', '0.50%', 'n']
    ];
    document.getElementById('stats').innerHTML = stats.map(r =>
        `<div class="stat-row"><span>${r[0]}</span><span class="val-${r[2]}">${r[1]}</span></div>`).join('');

    const distRow = (r, col) => `<div class="stat-row"><span class="label">${r[0]}</span><span class="bar-slot"><i class="bar bar-${col}" style="width:${r[1]}px"></i></span><span class="val-${col}">${r[2]}</span></div>`;
    const ups = [['A股 涨停', 1, 52], ['涨幅 &gt; 7%', 3, 70], ['涨幅 5-7%', 1, 57], ['涨幅 3-5%', 4, 136], ['涨幅 0-3%', 47, 1586]];
    const downs = [['跌幅 0-3%', 87, 2941], ['跌幅 3-5%', 6, 205], ['跌幅 5-7%', 1, 59], ['跌幅 &gt; 7%', 1, 31], ['A股 跌停', 1, 6]];
    document.getElementById('ups').innerHTML = ups.map(r => distRow(r, 'r')).join('');
    document.getElementById('downs').innerHTML = downs.map(r => distRow(r, 'g')).join('');

    const vols = ['7194万', '1.02亿', '9489万', '8987万', '8855万', '7681万', '7932万', '7787万', '7730万', '7712万', '8386万', '7774万', '7177万',
        '8206万', '7532万', '6455万', '6693万', '6400万', '6852万', '7445万', '7677万', '1126万', '1771万', '6.87亿', '14.4亿', '4.10亿'];
    // the first 19 prices sit under the drawing palette
    const prices = { 19: '2858.10', 20: '2857.59', 21: '2857.72', 22: '2857.71', 23: '2857.57', 24: '2856.77', 25: '2856.58' };
    document.getElementById('trades').innerHTML = vols.map((v, i) => {
        const time = i < 20 ? '14:56' : i < 23 ? '14:57' : '15:00';
        return `<div class="trade-row"><span>${time}</span><span>${prices[i] || ''}</span><span>${v}</span></div>`;
    }).join('');
}

function drawBreadth() {
    let s = '';
    const tops = ['#fff', '#f00', '#0a0', '#fff', '#fff', '#f00', '#0a0', '#fff'];
    tops.forEach((c, i) => {
        const x = i * 12.5 + (i > 3 ? 3 : 0);
        s += rect(x, 4, 12, 9, '', c);
        s += `<rect x="${x + 1}" y="16" width="11" height="3" fill="#d01818"/><rect x="${x + 1}" y="21" width="11" height="3" fill="#d01818"/>`;
    });
    document.getElementById('breadth').innerHTML = s;
}

function drawPalette() {
    const L = (a, b, c, d) => `<path d="M${a} ${b}L${c} ${d}" class="ic"/>`;
    const P = d => `<path d="${d}" class="ic"/>`;
    const K = d => `<path d="${d}" class="ic-k"/>`;
    const D = (x, y) => `<rect x="${x - 1.5}" y="${y - 1.5}" width="3" height="3" class="ic-dot"/>`;
    const T = (x, y, t) => `<text x="${x}" y="${y}" class="ic-txt">${t}</text>`;
    const C = (d, c) => `<path d="${d}" fill="${c}"/>`;
    const B = (t, c) => `<text x="11" y="17" class="ic-txt ic-big" style="fill:${c}">${t}</text>`;
    const vlines = xs => xs.map(x => K(`M${x} 3v16`)).join('');
    const blines = xs => xs.map(x => P(`M${x} 3v16`)).join('');
    const icons = [
        K('M7 3v14l3-3 3 5 2-1-3-5h4z'), L(4, 17, 17, 4) + D(5, 16) + D(16, 5), L(3, 18, 18, 3) + D(7, 14), L(4, 17, 18, 4) + K('M12 4h6v6') + D(5, 16),
        L(2, 19, 19, 3) + D(5, 16), L(3, 11, 19, 11) + D(11, 11), L(4, 11, 19, 11) + D(7, 11), L(3, 11, 19, 11) + D(5, 11) + D(17, 11),
        K('M11 3v16') + D(11, 11), T(4, 12, '123') + L(4, 15, 19, 15) + D(5, 15), L(2, 14, 14, 3) + L(5, 18, 19, 5) + L(10, 19, 19, 10) + D(8, 12), L(2, 14, 14, 3) + L(6, 18, 19, 5) + D(5, 11) + D(12, 12),
        L(3, 12, 11, 4) + L(9, 18, 19, 8) + D(7, 8) + D(13, 14), P('M9 4a7 7 0 0 1 0 14'), '<circle cx="11" cy="11" r="8" class="ic-k"/>' + K('M11 11l4-4') + D(11, 11), '<circle cx="11" cy="11" r="8" class="ic"/>' + P('M4 7l14 2-4 8-7-1z'),
        P('M2 4l4 14 4-12 4 12 5-14'), P('M2 18l3-6 2 3 3-10 3 10 2-4 3 7'), P('M2 18l5-6 2 3 4-6 2 2 4-7'), P('M2 3l5 10 3-6 7 12'),
        P('M2 19l3-7 2 2 4-9 3 5 2-3 3 8'), T(3, 9, 'GP') + L(2, 11, 20, 11) + L(2, 16, 20, 16), T(3, 9, 'GA') + L(2, 11, 20, 11) + L(2, 16, 20, 16), T(4, 9, 'G') + L(2, 3, 20, 3) + L(2, 11, 20, 11) + L(2, 16, 20, 16),
        T(3, 10, '%') + P('M11 4h9M11 7h9M11 10h9M2 13h18M2 17h18'), T(3, 10, 'T') + P('M11 4h9M11 7h9M11 10h9M2 13h18M2 17h18'), K('M3 3v16M19 3v16') + P('M3 11L19 3M3 15L19 7M3 19L19 11'), K('M3 3v16M19 3v16') + P('M3 11L19 4M3 15L19 8M3 19L19 12M13 3L10 19'),
        K('M3 3v16M19 3v16') + P('M3 14L19 8'), vlines([4, 9, 14, 19]), blines([4, 9, 14, 19]), P('M3 3v16M6 3v16M19 3v16') + T(11, 10, 'G'),
        blines([2, 5, 8]) + vlines([12, 17, 21]), blines([2, 4, 6, 8, 10]) + vlines([14, 19]), blines([3]) + vlines([8, 11, 14, 20]), P('M2 19L20 3M2 19L20 9M2 19L20 13M2 19L20 18'),
        K('M3 3v16h17') + P('M3 19L19 3M3 19L20 9M3 19L20 14'), K('M11 4v14M4 11l7 7 7-7'), P('M3 6L19 3 11 19zM3 6l8 8'), P('M3 4h17v14H3z'),
        C('M11 4l6 7h-4v7H9v-7H5z', '#e00000'), C('M9 4h4v7h4l-6 7-6-7h4z', '#157a1c'), K('M3 18L16 4') + C('M15 9l5 6h-3v4h-4v-4h-3z', '#e00000'), '<text x="11" y="17" class="ic-txt ic-big" style="fill:#111">A</text>',
        '<text x="12" y="18" class="ic-txt ic-big" style="fill:#111">A</text>' + K('M3 6h6M6 3v6'), '<rect x="3.500" y="3.500" width="15" height="15" fill="#999" stroke="#aaa" stroke-width="2"/>', '<path d="M4 4l14 14M18 4L4 18" stroke="#d81010" stroke-width="2" fill="none"/>', '<rect x="3.500" y="11.500" width="6" height="7" fill="none" stroke="#aaa"/><path d="M10 11l5-5" stroke="#aaa"/><circle cx="16" cy="6" r="3.500" fill="#f0e820" stroke="#aaa"/>',
        K('M4 3.500h14v16H4z') + P('M6 7h10M6 10h10M6 13h10M6 16h10'), K('M3 7.500h16v7H3z') + P('M5 8v3M8 8v3M11 8v3M14 8v3M17 8v3'), K('M3 5.500h16v12H3z') + `<rect x="6" y="8" width="7" height="7" fill="#2a8a6a"/>`, K('M3 18L11 5l8 13M7 18l4-7 4 7'),
        B('上', '#d81010'), B('下', '#157a1c'), C('M11 2l5 5H6z', '#e00000') + C('M11 8l5 5H6z', '#f0c000') + C('M11 14l6 5H5z', '#157a1c'), '',
        B('买', '#bbb'), B('卖', '#bbb'), B('平', '#bbb')
    ];
    document.getElementById('palette').innerHTML = icons.map(i => `<svg viewBox="0 0 22 22">${i}</svg>`).join('');
}

drawKline();
drawVolume();
fillPanel();
drawBreadth();
drawPalette();
```
